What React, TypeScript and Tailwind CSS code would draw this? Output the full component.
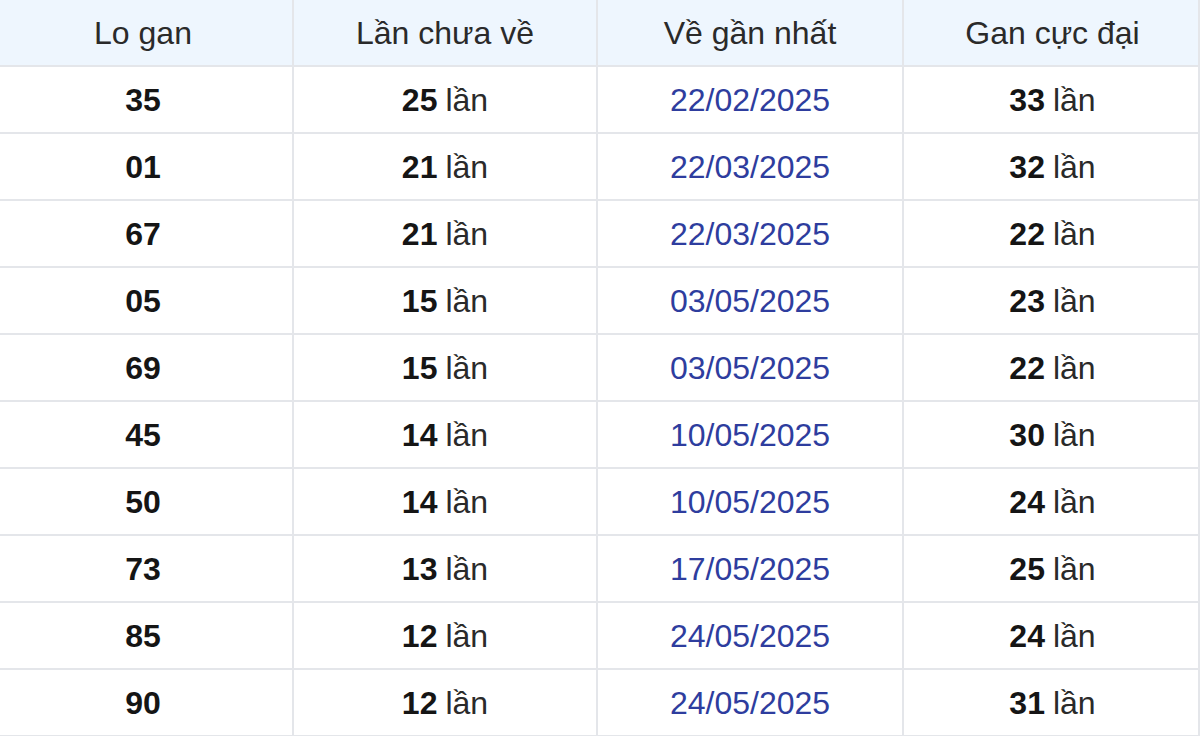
import React from "react";

type Row = { lo: string; chua: number; date: string; max: number };

const rows: Row[] = [
  { lo: "35", chua: 25, date: "22/02/2025", max: 33 },
  { lo: "01", chua: 21, date: "22/03/2025", max: 32 },
  { lo: "67", chua: 21, date: "22/03/2025", max: 22 },
  { lo: "05", chua: 15, date: "03/05/2025", max: 23 },
  { lo: "69", chua: 15, date: "03/05/2025", max: 22 },
  { lo: "45", chua: 14, date: "10/05/2025", max: 30 },
  { lo: "50", chua: 14, date: "10/05/2025", max: 24 },
  { lo: "73", chua: 13, date: "17/05/2025", max: 25 },
  { lo: "85", chua: 12, date: "24/05/2025", max: 24 },
  { lo: "90", chua: 12, date: "24/05/2025", max: 31 },
];

const grid = "grid grid-cols-[294px_304px_306px_1fr]";
const cell = "h-[67px] flex items-center justify-center border-b-2 border-r-2 border-[#e4e6ea]";

export default function App() {
  return (
    <div className="w-[1200px] h-[736px] overflow-hidden bg-white font-['Liberation_Sans',Arial,sans-serif] text-[32px] text-[#151515]">
      {/* header */}
      <div className={`${grid} bg-[#eef6fe] text-[#2a2a2a]`}>
        <div className={`${cell} pr-[6px]`}>Lo gan</div>
        <div className={cell}>Lần chưa về</div>
        <div className={cell}>Về gần nhất</div>
        <div className={`${cell} border-r-0 pl-[3px]`}>Gan cực đại</div>
      </div>

      {/* body */}
      {rows.map((r) => (
        <div key={r.lo} className={grid}>
          <div className={`${cell} pr-[6px] font-bold`}>{r.lo}</div>
          <div className={cell}>
            <span className="font-bold">{r.chua}</span>
            <span className="ml-2 text-[#2a2a2a]">lần</span>
          </div>
          <div className={`${cell} text-[#2e3d9e]`}>{r.date}</div>
          <div className={`${cell} border-r-0 pl-[3px]`}>
            <span className="font-bold">{r.max}</span>
            <span className="ml-2 text-[#2a2a2a]">lần</span>
          </div>
        </div>
      ))}
    </div>
  );
}
